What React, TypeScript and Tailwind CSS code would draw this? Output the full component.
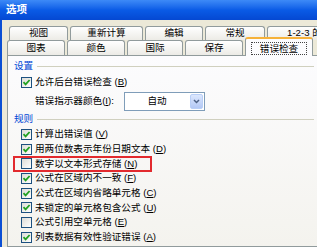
const Check = ({ on }: { on: boolean }) => (
  <span className="w-[11px] h-[11px] shrink-0 border border-[#1c5180] bg-gradient-to-br from-[#dcdcd7] to-white flex items-center justify-center">
    {on && (
      <svg width="9" height="9" viewBox="0 0 9 9">
        <path d="M1.5 4.2 L3.6 6.4 L7.6 2" fill="none" stroke="#21a121" strokeWidth="1.8" />
      </svg>
    )}
  </span>
);

const Label = ({ text, k }: { text: string; k: string }) => (
  <span className="whitespace-nowrap">
    {text} (<span className="underline">{k}</span>)
  </span>
);

const Tab = ({ label, w }: { label: string; w: string }) => (
  <div
    className={`${w} h-full shrink-0 border border-b-0 border-[#919b9c] rounded-t-[3px] bg-gradient-to-b from-white to-[#ecebe6] flex items-center justify-center whitespace-nowrap`}
  >
    {label}
  </div>
);

const Section = ({ title }: { title: string }) => (
  <div className="h-[14px] flex items-center gap-[4px]">
    <span className="text-[#0046d5]">{title}</span>
    <div className="flex-1 h-px bg-[#d0d0bf]" />
  </div>
);

const rules = [
  { text: "计算出错误值", k: "V", on: true },
  { text: "用两位数表示年份日期文本", k: "D", on: true },
  { text: "数字以文本形式存储", k: "N", on: false, mark: true },
  { text: "公式在区域内不一致", k: "F", on: true },
  { text: "公式在区域内省略单元格", k: "C", on: true },
  { text: "未锁定的单元格包含公式", k: "U", on: true },
  { text: "公式引用空单元格", k: "E", on: false },
  { text: "列表数据有效性验证错误", k: "A", on: true },
];

export default function App() {
  return (
    <div className="w-[317px] h-[247px] overflow-hidden flex flex-col bg-[#ece9d8] text-[9.6px] text-black font-['Liberation_Sans','Noto_Sans_CJK_SC',sans-serif]">
      <div className="h-[20px] shrink-0 bg-gradient-to-b from-[#3d8af7] via-[#0a5be6] to-[#0548d2] flex items-center pl-[6px]">
        <span className="text-white font-bold text-[10.5px]">选项</span>
      </div>

      <div className="flex-1 flex min-h-0">
        <div className="w-[2px] shrink-0 bg-[#0b4fd4]" />
        <div className="flex-1 min-w-0 flex flex-col pl-[5px] pt-[6px]">
          <div className="h-[14px] flex gap-[2px] ml-[2px]">
            <Tab label="视图" w="w-[59px]" />
            <Tab label="重新计算" w="w-[73px]" />
            <Tab label="编辑" w="w-[58px]" />
            <Tab label="常规" w="w-[60px]" />
            <Tab label="1-2-3 的帮助" w="w-[94px]" />
          </div>
          <div className="h-[15px] flex items-end gap-[2px] relative z-10">
            <Tab label="图表" w="w-[58px]" />
            <Tab label="颜色" w="w-[58px]" />
            <Tab label="国际" w="w-[56px]" />
            <Tab label="保存" w="w-[58px]" />
            <div className="w-[68px] h-[19px] mb-[-1px] shrink-0 border-x border-[#919b9c] border-t-2 border-t-[#f6b23a] rounded-t-[3px] bg-[#fcfcfe] flex items-center justify-center pt-[1px]">
              <span className="border border-dotted border-[#444] px-[8px] leading-[11px]">错误检查</span>
            </div>
          </div>

          <div className="flex-1 border border-[#919b9c] mr-[-12px] bg-gradient-to-b from-[#fcfcfe] to-[#f4f3ee] pl-[6px] pr-[14px] flex flex-col">
            <div className="mt-[3px]">
              <Section title="设置" />
            </div>
            <div className="h-[14px] mt-[2px] flex items-center gap-[3px] pl-[7px]">
              <Check on />
              <Label text="允许后台错误检查" k="B" />
            </div>
            <div className="h-[19px] mt-[3px] flex items-center pl-[21px]">
              <span className="w-[89px] whitespace-nowrap">
                错误指示器颜色(<span className="underline">I</span>):
              </span>
              <div className="w-[81px] h-[19px] border border-[#7f9db9] bg-white flex">
                <span className="flex-1 flex items-center justify-center">自动</span>
                <span className="w-[13px] m-[1px] rounded-[2px] border border-[#b9cff7] bg-gradient-to-b from-[#dce7fd] to-[#b3c8f5] flex items-center justify-center">
                  <svg width="7" height="5" viewBox="0 0 7 5">
                    <path d="M1 1 L3.5 3.5 L6 1" fill="none" stroke="#4d6185" strokeWidth="1.5" />
                  </svg>
                </span>
              </div>
            </div>
            <div className="mt-[1px]">
              <Section title="规则" />
            </div>
            <div className="mt-[1px] flex flex-col">
              {rules.map((r) => (
                <div key={r.k} className="h-[14.7px] flex items-center gap-[3px] pl-[7px] relative">
                  <Check on={r.on} />
                  <Label text={r.text} k={r.k} />
                  {r.mark && (
                    <span className="absolute left-[-1px] top-0 w-[139px] h-[16px] border-2 border-[#e22a2e]" />
                  )}
                </div>
              ))}
            </div>
          </div>
        </div>
      </div>
    </div>
  );
}
